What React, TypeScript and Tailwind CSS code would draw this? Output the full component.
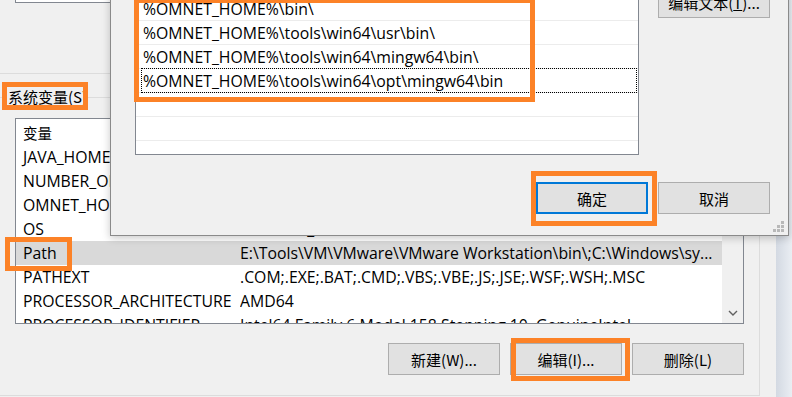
import React from "react";

function Btn({
  children,
  border = "border border-[#adadad]",
}: {
  children: React.ReactNode;
  border?: string;
}) {
  return (
    <div
      className={`flex items-center justify-center h-[32px] w-[112px] shrink-0 bg-[#e1e1e1] text-[15px] leading-none whitespace-nowrap ${border}`}
    >
      {children}
    </div>
  );
}

const sysRows: [string, string][] = [
  ["JAVA_HOME", "C:\\Program Files\\Java\\jdk1.8.0_201"],
  ["NUMBER_OF_PROCESSORS", "12"],
  ["OMNET_HOME", "E:\\omnetpp-5.6.2"],
  ["OS", "Windows_NT"],
  ["Path", "E:\\Tools\\VM\\VMware\\VMware Workstation\\bin\\;C:\\Windows\\sy..."],
  ["PATHEXT", ".COM;.EXE;.BAT;.CMD;.VBS;.VBE;.JS;.JSE;.WSF;.WSH;.MSC"],
  ["PROCESSOR_ARCHITECTURE", "AMD64"],
  ["PROCESSOR_IDENTIFIER", "Intel64 Family 6 Model 158 Stepping 10, GenuineIntel"],
];

const editRows = [
  "%JAVA_HOME%\\bin",
  "%OMNET_HOME%\\bin\\",
  "%OMNET_HOME%\\tools\\win64\\usr\\bin\\",
  "%OMNET_HOME%\\tools\\win64\\mingw64\\bin\\",
  "%OMNET_HOME%\\tools\\win64\\opt\\mingw64\\bin",
  "",
  "",
  "",
];

export default function App() {
  return (
    <div className="relative w-[792px] h-[397px] overflow-hidden flex bg-[#f0f0f0] text-black font-['Open_Sans','Noto_Sans_CJK_SC',sans-serif]">
      {/* Background window: environment variables */}
      <div className="w-[776px] shrink-0 flex flex-col bg-[#f0f0f0]">
        <div className="h-[74px] w-[760px] border-r border-b border-[#dcdcdc]">
          <div className="ml-[15px] w-[729px] h-[3px] border-x border-b border-[#828790] bg-white" />
        </div>
        <div className="mt-[23px] w-[760px] h-[299px] border-t border-r border-b border-[#dcdcdc] flex flex-col">
          <div className="-mt-[10px] ml-[7px] self-start h-[18px] px-[1px] bg-[#f0f0f0] text-[15px] leading-[18px] font-['Noto_Sans_CJK_SC',sans-serif]">
            系统变量(S)
          </div>
          <div className="mt-[12px] ml-[15px] w-[729px] h-[206px] border border-[#828790] bg-white flex overflow-hidden">
            <div className="flex-1 flex flex-col text-[15.8px]">
              <div className="h-[26px] shrink-0 flex items-center pt-px">
                <div className="w-[224px] pl-[7px] font-['Noto_Sans_CJK_SC',sans-serif] text-[14.5px]">变量</div>
                <div className="font-['Noto_Sans_CJK_SC',sans-serif] text-[14.5px]">值</div>
              </div>
              {sysRows.map(([k, v]) => (
                <div
                  key={k}
                  className={`h-[24px] shrink-0 flex items-center pt-[2px] whitespace-nowrap ${k === "Path" ? "bg-[#d9d9d9]" : ""}`}
                >
                  <div className="w-[224px] shrink-0 pl-[7px] overflow-hidden">{k}</div>
                  <div className="flex-1 overflow-hidden">{v}</div>
                </div>
              ))}
            </div>
            <div className="w-[21px] shrink-0 bg-[#f0f0f0] flex flex-col justify-end items-center pb-[7px]">
              <svg width="10" height="6" viewBox="0 0 10 6">
                <path d="M1 1 L5 5 L9 1" fill="none" stroke="#606060" strokeWidth="1.4" />
              </svg>
            </div>
          </div>
          <div className="mt-[19px] ml-[15px] w-[729px] flex justify-end gap-[10px] font-['Noto_Sans_CJK_SC',sans-serif]">
            <Btn>新建(W)...</Btn>
            <Btn>编辑(I)...</Btn>
            <Btn>删除(L)</Btn>
          </div>
        </div>
      </div>
      <div className="flex-1 bg-gradient-to-r from-[#d3d9e2] to-[#eaeef3]" />

      {/* Foreground window: edit environment variable */}
      <div className="absolute left-[110px] top-[-40px] w-[679px] h-[276px] border border-[#8a8a8a] bg-[#f0f0f0] shadow-[0_2px_8px_rgba(0,0,0,0.22)] flex flex-col pl-[24px] pr-[18px] pt-[11px]">
        <div className="flex gap-[19px]">
          <div className="w-[504px] h-[183px] shrink-0 border border-[#828790] bg-white flex flex-col overflow-hidden text-[15.8px]">
            {editRows.map((r, i) => (
              <div
                key={i}
                className="relative h-[24px] shrink-0 border-b border-[#ececec] pl-[7px] pt-[2px] flex items-center whitespace-nowrap"
              >
                {r}
                {i === 4 && (
                  <div className="absolute left-[5px] right-[1px] top-[-1px] bottom-[-1px] border border-dotted border-black" />
                )}
              </div>
            ))}
          </div>
          <div className="mt-[14px] flex flex-col font-['Noto_Sans_CJK_SC',sans-serif]">
            <Btn>
              编辑文本(<span className="underline">T</span>)...
            </Btn>
          </div>
        </div>
        <div className="mt-[27px] flex justify-end gap-[10px] font-['Noto_Sans_CJK_SC',sans-serif]">
          <Btn border="border-2 border-[#0078d7]">确定</Btn>
          <Btn>取消</Btn>
        </div>
        <svg className="absolute right-[3px] bottom-[2px]" width="12" height="12" viewBox="0 0 12 12">
          <rect x="8" y="0" width="3" height="3" fill="#b8b8b8" />
          <rect x="4" y="4" width="3" height="3" fill="#b8b8b8" />
          <rect x="8" y="4" width="3" height="3" fill="#b8b8b8" />
          <rect x="0" y="8" width="3" height="3" fill="#b8b8b8" />
          <rect x="4" y="8" width="3" height="3" fill="#b8b8b8" />
          <rect x="8" y="8" width="3" height="3" fill="#b8b8b8" />
        </svg>
      </div>

      {/* Orange annotation boxes */}
      <div className="absolute left-[134px] top-[-2px] w-[401px] h-[104px] border-[5px] border-[#fc8227] pointer-events-none" />
      <div className="absolute left-[2px] top-[82px] w-[86px] h-[28px] border-[5px] border-[#fc8227] pointer-events-none" />
      <div className="absolute left-[5px] top-[237px] w-[67px] h-[34px] border-[5px] border-[#fc8227] pointer-events-none" />
      <div className="absolute left-[531px] top-[171px] w-[126px] h-[55px] border-[5px] border-[#fc8227] pointer-events-none" />
      <div className="absolute left-[511px] top-[338px] w-[119px] h-[43px] border-[5px] border-[#fc8227] pointer-events-none" />
    </div>
  );
}
